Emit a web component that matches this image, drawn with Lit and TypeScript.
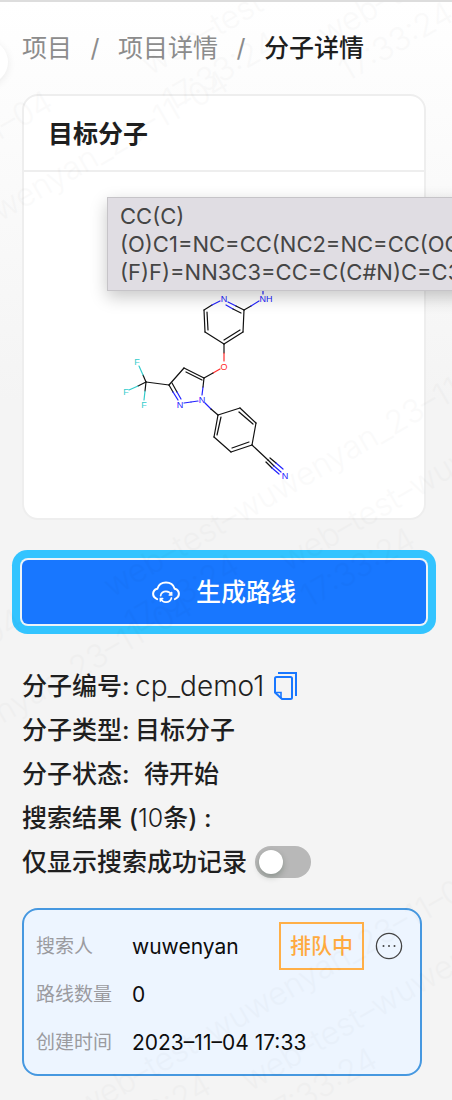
import { LitElement, html, svg, css } from "lit";
import { customElement, state } from "lit/decorators.js";

type Bond = [number, number, number, number, string];

const K = "#111111";
const N = "#2222ff";
const O = "#ff2a2a";
const F = "#33cccc";

const BONDS: Bond[] = [
  // pyridine ring
  [228, 302, 236, 306, N], [236, 306, 244, 310, K],
  [226, 305, 233, 309, N], [233, 309, 241, 313, K],
  [244, 310, 243, 332, K],
  [243, 332, 224, 344, K], [240, 330, 224, 340, K],
  [224, 344, 205, 332, K],
  [205, 332, 204, 310, K], [208, 330, 207, 312, K],
  [204, 310, 212, 305, K], [212, 305, 220, 301, N],
  // amine
  [244, 310, 251, 306, K], [251, 306, 259, 301, N], [263, 280, 263, 294, N],
  // ether
  [224, 344, 224, 353, K], [224, 353, 224, 361, O],
  [220, 369, 213, 373, O], [213, 373, 204, 378, K],
  // pyrazole ring
  [204, 378, 184, 368, K], [202, 380, 186, 372, K],
  [184, 368, 169, 385, K],
  [169, 385, 173, 392, K], [173, 392, 178, 400, N],
  [172, 383, 177, 392, K], [177, 392, 181, 399, N],
  [184, 403, 191, 402, N], [191, 402, 198, 401, N],
  [202, 395, 203, 387, N], [203, 387, 204, 378, K],
  // trifluoromethyl
  [169, 385, 146, 382, K],
  [146, 382, 143, 375, K], [143, 375, 139, 366, F],
  [146, 382, 138, 386, K], [138, 386, 129, 390, F],
  [146, 382, 145, 391, K], [145, 391, 144, 400, F],
  // phenyl ring
  [205, 403, 211, 409, N], [211, 409, 218, 415, K],
  [218, 415, 240, 408, K],
  [240, 408, 256, 423, K], [239, 412, 253, 424, K],
  [256, 423, 252, 445, K],
  [252, 445, 231, 452, K], [249, 442, 232, 448, K],
  [231, 452, 214, 437, K],
  [214, 437, 218, 415, K], [217, 435, 221, 417, K],
  // nitrile
  [252, 445, 268, 460, K],
  [268, 460, 274, 466, K], [274, 466, 281, 472, N],
  [270, 458, 276, 463, K], [276, 463, 283, 469, N],
  [266, 462, 272, 468, K], [272, 468, 279, 474, N],
];

const ATOMS: [number, number, string, string][] = [
  [224, 302, "N", N],
  [266, 302, "NH", N],
  [224, 370, "O", O],
  [180, 408, "N", N],
  [202, 403, "N", N],
  [137, 365, "F", F],
  [126, 395, "F", F],
  [144, 408, "F", F],
  [285, 479, "N", N],
];

const MARKS: [number, number][] = [
  [150, 74], [326, 44], [-168, 317], [-344, 337],
  [112, 596], [288, 570], [-204, 841], [-374, 855],
  [84, 1116], [250, 1090],
];

@customElement("app-root")
export class AppRoot extends LitElement {
  @state() private onlySuccess = false;

  static styles = css`
    :host {
      display: block;
      position: relative;
      overflow: hidden;
      min-height: 100vh;
      box-sizing: border-box;
      border-top: 2px solid #dddddd;
      background: linear-gradient(#ffffff 0, #f4f4f4 400px);
      color: #1f1f1f;
      font-family: Inter, "Noto Sans CJK SC", sans-serif;
      font-size: 25px;
      line-height: 44px;
    }
    * { box-sizing: border-box; }
    button { font: inherit; padding: 0; border: 0; background: none; cursor: pointer; }
    .drawer {
      position: absolute;
      left: -36px;
      top: 38px;
      width: 44px;
      height: 44px;
      border-radius: 50%;
      background: #fff;
      box-shadow: 0 2px 8px rgba(0, 0, 0, 0.08);
    }
    .page { padding: 24px 26px 24px 22px; }
    .crumbs ol {
      display: flex;
      gap: 17px;
      margin: 0;
      padding: 0;
      list-style: none;
      white-space: nowrap;
    }
    .crumbs a, .slash { color: #8c8c8c; text-decoration: none; }
    .slash { min-width: 12px; text-align: center; }
    .current { color: #1f1f1f; font-weight: 500; }
    .card {
      margin-top: 24px;
      border: 2px solid #eeeeee;
      border-radius: 16px;
      background: #fff;
    }
    .card h2 {
      margin: 0;
      padding: 16px 24px 14px;
      border-bottom: 2px solid #eeeeee;
      font-size: 25px;
      font-weight: 700;
    }
    .figure { position: relative; height: 346px; }
    .figure svg { display: block; width: 100%; height: 100%; }
    .atom { font: 9px "Liberation Sans", sans-serif; }
    .tip {
      position: absolute;
      left: 83px;
      top: 25px;
      padding: 4px 12px;
      border: 1px solid #c6c4c8;
      background: #e0dde3;
      box-shadow: 0 6px 16px rgba(0, 0, 0, 0.22);
      color: #454545;
      font-size: 22px;
      line-height: 28px;
      white-space: nowrap;
    }
    .generate {
      display: flex;
      align-items: center;
      justify-content: center;
      gap: 16px;
      width: 100%;
      height: 64px;
      margin: 40px 0;
      border-radius: 6px;
      background: #1877ff;
      color: #fff;
      font-weight: 500;
      box-shadow: 0 0 0 2px #eef3f8, 0 0 0 10px #33c4ff;
    }
    .facts { margin: 0; }
    .row { display: flex; align-items: center; height: 44px; white-space: nowrap; font-weight: 500; }
    .row dt { min-width: 113px; }
    .row dd { margin: 0; }
    .row .code { font-size: 28px; font-weight: 300; }
    .light { font-weight: 300; }
    .wide dt { min-width: 122px; }
    .copy { display: flex; margin-left: 10px; }
    .switch {
      appearance: none;
      width: 56px;
      height: 32px;
      margin: 0 0 0 8px;
      padding: 4px;
      border-radius: 16px;
      background: #b8b8b8;
      cursor: pointer;
    }
    .switch::before {
      content: "";
      display: block;
      width: 24px;
      height: 24px;
      border-radius: 50%;
      background: #fff;
      box-shadow: 0 3px 6px rgba(0, 35, 11, 0.25);
    }
    .switch:checked { background: #1877ff; }
    .switch:checked::before { margin-left: 24px; }
    .record {
      position: relative;
      margin: 24px 4px 0 0;
      padding: 13px 16px 7px 12px;
      border: 2px solid #4698e0;
      border-radius: 16px;
      background: #edf5ff;
      font-size: 21px;
      line-height: 48px;
      color: #0d0d0d;
    }
    .record dl { margin: 0; }
    .line { display: flex; height: 48px; white-space: nowrap; }
    .line dt { width: 96px; color: #9b9b9f; font-size: 19px; }
    .line dd { margin: 0; }
    .actions {
      position: absolute;
      top: 12px;
      right: 17px;
      display: flex;
      align-items: center;
      gap: 11px;
    }
    .tag {
      height: 48px;
      padding: 0 9px;
      border: 2px solid #ffaf47;
      color: #ffaa3e;
      font-weight: 500;
      line-height: 44px;
    }
    .more { display: flex; }
    .marks {
      position: absolute;
      inset: 0;
      width: 100%;
      height: 100%;
      pointer-events: none;
      fill: #000;
      opacity: 0.014;
      font-size: 32px;
      font-weight: 300;
    }
  `;

  private toggle(e: Event) {
    this.onlySuccess = (e.target as HTMLInputElement).checked;
  }

  private molecule() {
    return html`<svg viewBox="24 172 400 346" role="img" aria-label="目标分子">
      ${BONDS.map(([a, b, c, d, k]) => svg`<line x1=${a} y1=${b} x2=${c} y2=${d} stroke=${k} stroke-width="1.2" stroke-linecap="round"></line>`)}
      ${ATOMS.map(([x, y, t, k]) => svg`<text class="atom" x=${x} y=${y} fill=${k} text-anchor="middle">${t}</text>`)}
    </svg>`;
  }

  render() {
    return html`
      <main class="page">
        <nav class="crumbs">
          <ol>
            <li><a href="#projects">项目</a></li>
            <li class="slash">/</li>
            <li><a href="#project">项目详情</a></li>
            <li class="slash">/</li>
            <li class="current">分子详情</li>
          </ol>
        </nav>

        <section class="card">
          <h2>目标分子</h2>
          <div class="figure">
            ${this.molecule()}
            <div class="tip" role="tooltip">
              CC(C)<br />(O)C1=NC=CC(NC2=NC=CC(OC<br />(F)F)=NN3C3=CC=C(C#N)C=C3
            </div>
          </div>
        </section>

        <button class="generate" type="button">
          <svg width="28" height="24" viewBox="0 0 30 24" fill="none" stroke="#fff" stroke-width="2.2" stroke-linecap="round">
            <path d="M5.5 19.6C3 18.6 1.2 16.6 1.2 14C1.2 11.2 3 9.2 5.7 8.5C7 4.5 10.5 1.9 15 1.9C19.5 1.9 23 4.5 24.3 8.5C27 9.2 28.8 11.2 28.8 14C28.8 16.6 27 18.6 24.5 19.6" />
            <path d="M9.2 16C9.8 13 12.1 11.4 15 11.4C17.6 11.4 19.6 12.7 20.6 14.8M21 12.6V15.2H18.6" stroke-width="1.8" />
            <path d="M20.8 18.4C20.2 21.2 17.9 22.8 15 22.8C12.4 22.8 10.4 21.5 9.4 19.4M9 21.6V19H11.4" stroke-width="1.8" />
          </svg>
          <span>生成路线</span>
        </button>

        <dl class="facts">
          <div class="row">
            <dt>分子编号:</dt>
            <dd class="code">cp_demo1</dd>
            <dd>
              <button class="copy" type="button" aria-label="复制">
                <svg width="24" height="28" viewBox="0 0 24 28" fill="none" stroke="#1877ff" stroke-width="2">
                  <path d="M4 1H22V24" />
                  <path d="M2.5 5H16.5Q18 5 18 6.5V25.5Q18 27 16.5 27H8L1 20.5V6.5Q1 5 2.5 5Z" />
                  <path d="M1.5 20.5H7V26.5" stroke-width="1.6" />
                </svg>
              </button>
            </dd>
          </div>
          <div class="row"><dt>分子类型:</dt><dd>目标分子</dd></div>
          <div class="row wide"><dt>分子状态:</dt><dd>待开始</dd></div>
        </dl>
        <div class="row"><span>搜索结果 (<span class="light">10</span>条) :</span></div>
        <div class="row">
          <label for="only">仅显示搜索成功记录</label>
          <input id="only" class="switch" type="checkbox" role="switch" .checked=${this.onlySuccess} @change=${this.toggle} />
        </div>

        <article class="record">
          <dl>
            <div class="line"><dt>搜索人</dt><dd>wuwenyan</dd></div>
            <div class="line"><dt>路线数量</dt><dd>0</dd></div>
            <div class="line"><dt>创建时间</dt><dd>2023–11–04 17:33</dd></div>
          </dl>
          <div class="actions">
            <span class="tag">排队中</span>
            <button class="more" type="button" aria-label="更多">
              <svg width="28" height="28" viewBox="0 0 28 28" fill="#444">
                <circle cx="14" cy="14" r="12.6" fill="none" stroke="#444" stroke-width="1.3" />
                <circle cx="8.5" cy="14" r="1" /><circle cx="14" cy="14" r="1" /><circle cx="19.5" cy="14" r="1" />
              </svg>
            </button>
          </div>
        </article>
      </main>
      <button class="drawer" type="button" aria-label="菜单"></button>
      <svg class="marks" aria-hidden="true">
        ${MARKS.map(([x, y]) => svg`<g transform="translate(${x} ${y}) rotate(-30)">
          <text>web–test–wuwenyan_23–11–04</text>
          <text y="42">17:33:24</text>
        </g>`)}
      </svg>
    `;
  }
}
